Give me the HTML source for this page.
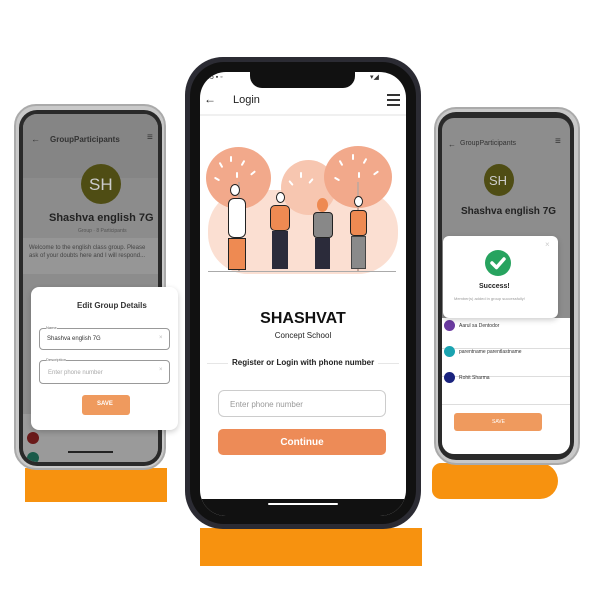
<!DOCTYPE html>
<html><head><meta charset="utf-8"><style>
*{margin:0;padding:0;box-sizing:border-box}
body{width:600px;height:600px;background:#fff;position:relative;overflow:hidden;font-family:"Liberation Sans",sans-serif}
.a{position:absolute}
.t{position:absolute;white-space:nowrap}
.lf{position:absolute;width:2px;height:6px;background:#fff;border-radius:1px}
</style></head><body>

<div class="a" style="left:25px;top:468px;width:142px;height:34px;background:#f7920f"></div>
<div class="a" style="left:200px;top:528px;width:222px;height:38px;background:#f7920f"></div>
<div class="a" style="left:432px;top:463px;width:126px;height:36px;background:#f7920f;border-radius:10px 20px 20px 10px"></div>

<!-- LEFT PHONE -->
<div class="a" style="left:14px;top:104px;width:152px;height:366px;background:#c9c9c9;border-radius:22px;border:2px solid #aaa"></div>
<div class="a" style="left:19px;top:110px;width:143px;height:356px;background:#2a2a2a;border-radius:18px"></div>
<div class="a" style="left:23px;top:114px;width:135px;height:348px;background:#8c8c8c;border-radius:14px;overflow:hidden">
  <div class="a" style="left:0;top:0;width:135px;height:64px;background:#858585"></div>
  <div class="t" style="left:8px;top:20px;font-size:9px;color:#333">←</div>
  <div class="t" style="left:27px;top:21px;font-size:8px;font-weight:bold;color:#333">GroupParticipants</div>
  <div class="t" style="left:124px;top:18px;font-size:10px;color:#333">≡</div>
  <div class="a" style="left:58px;top:50px;width:40px;height:40px;border-radius:50%;background:#4f4d14"></div>
  <div class="t" style="left:66px;top:61px;font-size:17px;color:#ccc">SH</div>
  <div class="t" style="left:26px;top:98px;font-size:11px;font-weight:bold;color:#222">Shashva english 7G</div>
  <div class="t" style="left:55px;top:114px;font-size:5px;color:#555">Group · 8 Participants</div>
  <div class="a" style="left:0;top:124px;width:135px;height:36px;background:#969696"></div>
  <div class="t" style="left:6px;top:130px;font-size:6px;color:#444;line-height:8px">Welcome to the english class group. Please<br>ask of your doubts here and I will respond...</div>
  <div class="a" style="left:0;top:300px;width:135px;height:48px;background:#9a9a9a"></div>
  <div class="a" style="left:4px;top:318px;width:12px;height:12px;border-radius:50%;background:#6a1a1a"></div>
  <div class="a" style="left:4px;top:338px;width:12px;height:12px;border-radius:50%;background:#1a5a4a"></div>
  <div class="a" style="left:45px;top:337px;width:45px;height:2px;background:#222"></div>
</div>
<div class="a" style="left:31px;top:287px;width:147px;height:143px;background:#fff;border-radius:8px;box-shadow:0 2px 6px rgba(0,0,0,.2)">
  <div class="t" style="left:46px;top:14px;font-size:8px;font-weight:bold;color:#333">Edit Group Details</div>
  <div class="a" style="left:8px;top:41px;width:131px;height:22px;border:1px solid #999;border-radius:4px"></div>
  <div class="t" style="left:15px;top:38px;font-size:4px;color:#666;background:#fff">Name</div>
  <div class="t" style="left:16px;top:49px;font-size:6px;color:#333">Shashva english 7G</div>
  <div class="t" style="left:128px;top:48px;font-size:6px;color:#bbb">×</div>
  <div class="a" style="left:8px;top:73px;width:131px;height:24px;border:1px solid #999;border-radius:4px"></div>
  <div class="t" style="left:15px;top:70px;font-size:4px;color:#666;background:#fff">Description</div>
  <div class="t" style="left:17px;top:83px;font-size:6px;color:#aaa">Enter phone number</div>
  <div class="t" style="left:128px;top:80px;font-size:6px;color:#bbb">×</div>
  <div class="a" style="left:51px;top:108px;width:48px;height:20px;background:#ef9a5e;border-radius:3px"></div>
  <div class="t" style="left:66px;top:114px;font-size:6px;font-weight:bold;color:#fff">SAVE</div>
</div>

<!-- RIGHT PHONE -->
<div class="a" style="left:434px;top:107px;width:146px;height:358px;background:#c8c8c8;border-radius:22px;border:2px solid #aaa"></div>
<div class="a" style="left:438px;top:112px;width:136px;height:348px;background:#2a2a2a;border-radius:18px"></div>
<div class="a" style="left:442px;top:118px;width:128px;height:336px;background:#8d8d8d;border-radius:12px;overflow:hidden">
  <div class="t" style="left:6px;top:22px;font-size:8px;color:#333">←</div>
  <div class="t" style="left:18px;top:22px;font-size:7px;color:#333">GroupParticipants</div>
  <div class="t" style="left:113px;top:18px;font-size:10px;color:#333">≡</div>
  <div class="a" style="left:42px;top:46px;width:30px;height:32px;border-radius:50%;background:#4f4d14"></div>
  <div class="t" style="left:47px;top:55px;font-size:13px;color:#ccc">SH</div>
  <div class="t" style="left:19px;top:88px;font-size:10px;font-weight:bold;color:#222">Shashva english 7G</div>
  <div class="a" style="left:0;top:200px;width:128px;height:136px;background:#fff"></div>
  <div class="a" style="left:0;top:230px;width:128px;height:1px;background:#ddd"></div>
  <div class="a" style="left:0;top:258px;width:128px;height:1px;background:#ddd"></div>
  <div class="a" style="left:0;top:286px;width:128px;height:1px;background:#ddd"></div>
  <div class="a" style="left:2px;top:202px;width:11px;height:11px;border-radius:50%;background:#6a3aa0"></div>
  <div class="t" style="left:17px;top:205px;font-size:5px;color:#333">Aarul sa Dentodor</div>
  <div class="a" style="left:2px;top:228px;width:11px;height:11px;border-radius:50%;background:#1aa3b0"></div>
  <div class="t" style="left:17px;top:231px;font-size:5px;color:#333">parentname parentlastname</div>
  <div class="a" style="left:2px;top:254px;width:11px;height:11px;border-radius:50%;background:#1a237e"></div>
  <div class="t" style="left:17px;top:257px;font-size:5px;color:#333">Rohit Sharma</div>
  <div class="a" style="left:12px;top:295px;width:88px;height:18px;background:#ef9a5e;border-radius:3px"></div>
  <div class="t" style="left:50px;top:301px;font-size:5px;color:#fff">SAVE</div>
</div>
<div class="a" style="left:443px;top:236px;width:115px;height:82px;background:#fff;border-radius:6px;box-shadow:0 2px 6px rgba(0,0,0,.2)">
  <div class="t" style="left:102px;top:4px;font-size:8px;color:#ccc">×</div>
  <div class="a" style="left:42px;top:14px;width:26px;height:26px;border-radius:50%;background:#27a35f"></div>
  <svg class="a" style="left:42px;top:14px" width="26" height="26"><path d="M7 13 L11.5 17.5 L19 9" stroke="#fff" stroke-width="3.5" fill="none" stroke-linecap="round" stroke-linejoin="round"/></svg>
  <div class="t" style="left:36px;top:47px;font-size:7px;font-weight:bold;color:#222">Success!</div>
  <div class="t" style="left:11px;top:60px;font-size:4px;color:#999">Member(s) added in group successfully!</div>
</div>

<!-- CENTER PHONE -->
<div class="a" style="left:185px;top:57px;width:236px;height:472px;background:#2b2b33;border-radius:38px"></div>
<div class="a" style="left:190px;top:62px;width:226px;height:462px;background:#111;border-radius:34px"></div>
<div class="a" style="left:200px;top:72px;width:206px;height:444px;background:#fff;border-radius:26px;overflow:hidden">
  <div class="a" style="left:50px;top:0;width:105px;height:16px;background:#111;border-radius:0 0 12px 12px"></div>
  <div class="t" style="left:6px;top:2px;font-size:7px;color:#333">55 ▪ ◦</div>
  <div class="t" style="left:170px;top:1px;font-size:7px;color:#333">▾◢</div>
  <div class="t" style="left:4px;top:20px;font-size:12px;color:#222">←</div>
  <div class="t" style="left:33px;top:22px;font-size:11px;color:#222">Login</div>
  <div class="a" style="left:187px;top:22px;width:13px;height:1.5px;background:#333;box-shadow:0 5px 0 #333,0 10px 0 #333"></div>
  <div class="a" style="left:0;top:42px;width:206px;height:2px;background:#f0f0f0"></div>
  <div class="a" style="left:8px;top:118px;width:190px;height:84px;border-radius:40px;background:#fbdfd2"></div>
  <div class="a" style="left:6px;top:75px;width:65px;height:62px;border-radius:50%;background:#f2a98b"></div>
  <div class="a" style="left:81px;top:88px;width:55px;height:55px;border-radius:50%;background:#f7c6b0"></div>
  <div class="a" style="left:124px;top:74px;width:68px;height:62px;border-radius:50%;background:#f2a98b"></div>
  <div class="lf" style="left:20px;top:90px;transform:rotate(-30deg)"></div>
  <div class="lf" style="left:30px;top:84px"></div>
  <div class="lf" style="left:42px;top:88px;transform:rotate(30deg)"></div>
  <div class="lf" style="left:52px;top:98px;transform:rotate(50deg)"></div>
  <div class="lf" style="left:16px;top:104px;transform:rotate(-60deg)"></div>
  <div class="lf" style="left:36px;top:100px"></div>
  <div class="lf" style="left:140px;top:88px;transform:rotate(-30deg)"></div>
  <div class="lf" style="left:152px;top:82px"></div>
  <div class="lf" style="left:164px;top:86px;transform:rotate(30deg)"></div>
  <div class="lf" style="left:175px;top:98px;transform:rotate(55deg)"></div>
  <div class="lf" style="left:136px;top:104px;transform:rotate(-60deg)"></div>
  <div class="lf" style="left:158px;top:100px"></div>
  <div class="lf" style="left:100px;top:100px"></div>
  <div class="lf" style="left:110px;top:106px;transform:rotate(40deg)"></div>
  <div class="lf" style="left:90px;top:108px;transform:rotate(-40deg)"></div>
  <div class="a" style="left:38px;top:110px;width:2px;height:90px;background:#c9a89a"></div>
  <div class="a" style="left:157px;top:110px;width:2px;height:90px;background:#c9a89a"></div>
  <div class="a" style="left:28px;top:126px;width:18px;height:40px;background:#fff;border:1px solid #222;border-radius:6px"></div>
  <div class="a" style="left:28px;top:166px;width:18px;height:32px;background:#ee8a52;border:1px solid #222"></div>
  <div class="a" style="left:70px;top:133px;width:20px;height:26px;background:#ee8a52;border:1px solid #222;border-radius:5px"></div>
  <div class="a" style="left:72px;top:159px;width:16px;height:38px;background:#2b2b3a"></div>
  <div class="a" style="left:76px;top:120px;width:9px;height:11px;border-radius:50%;background:#fff;border:1px solid #222"></div>
  <div class="a" style="left:113px;top:140px;width:20px;height:26px;background:#888;border:1px solid #222;border-radius:4px"></div>
  <div class="a" style="left:115px;top:166px;width:15px;height:31px;background:#2b2b3a"></div>
  <div class="a" style="left:117px;top:126px;width:11px;height:14px;border-radius:50%;background:#ee8a52"></div>
  <div class="a" style="left:150px;top:138px;width:17px;height:26px;background:#ee8a52;border:1px solid #222;border-radius:4px"></div>
  <div class="a" style="left:151px;top:164px;width:15px;height:33px;background:#8a8a8a;border:1px solid #444"></div>
  <div class="a" style="left:154px;top:124px;width:9px;height:11px;border-radius:50%;background:#fff;border:1px solid #222"></div>
  <div class="a" style="left:30px;top:112px;width:10px;height:12px;border-radius:50%;background:#fff;border:1px solid #222"></div>
  <div class="a" style="left:8px;top:199px;width:188px;height:1px;background:#aaa"></div>
  <div class="t" style="left:0;top:238px;width:206px;text-align:center;font-size:16px;font-weight:bold;color:#111">SHASHVAT</div>
  <div class="t" style="left:0;top:259px;width:206px;text-align:center;font-size:8px;color:#222">Concept School</div>
  <div class="a" style="left:7px;top:291px;width:192px;height:1px;background:#e6e6e6"></div>
  <div class="t" style="left:28px;top:286px;font-size:8px;font-weight:bold;color:#222;background:#fff;padding:0 4px">Register or Login with phone number</div>
  <div class="a" style="left:18px;top:318px;width:168px;height:27px;border:1px solid #ccc;border-radius:6px"></div>
  <div class="t" style="left:30px;top:328px;font-size:8px;color:#999">Enter phone number</div>
  <div class="a" style="left:18px;top:357px;width:168px;height:26px;background:#ed8b57;border-radius:5px"></div>
  <div class="t" style="left:0;top:365px;width:204px;text-align:center;font-size:10px;font-weight:bold;color:#fff">Continue</div>
  <div class="a" style="left:0;top:427px;width:206px;height:17px;background:#111"></div>
  <div class="a" style="left:68px;top:431px;width:70px;height:2px;background:#fff;border-radius:2px"></div>
</div>
</body></html>
